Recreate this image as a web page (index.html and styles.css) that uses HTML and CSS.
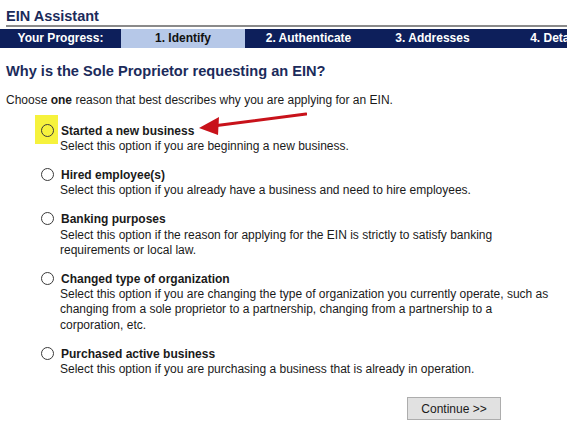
FILE: index.html
```html
<!DOCTYPE html>
<html>
<head>
<meta charset="utf-8">
<link rel="stylesheet" href="styles.css">
</head>
<body>
<div class="page">
  <div class="title">EIN Assistant</div>
  <div class="progress">
    <div class="step first">Your Progress:</div>
    <div class="step current">1. Identify</div>
    <div class="step">2. Authenticate</div>
    <div class="step">3. Addresses</div>
    <div class="step">4. Details</div>
  </div>
  <div class="content">
    <h1 class="heading">Why is the Sole Proprietor requesting an EIN?</h1>
    <p class="intro">Choose <b>one</b> reason that best describes why you are applying for an EIN.</p>
    <div class="options">
      <div class="option">
        <div class="radio-cell hl"><span class="radio"></span></div>
        <div class="text">
          <div class="label">Started a new business</div>
          <div class="desc">Select this option if you are beginning a new business.</div>
        </div>
      </div>
      <div class="option">
        <div class="radio-cell"><span class="radio"></span></div>
        <div class="text">
          <div class="label">Hired employee(s)</div>
          <div class="desc">Select this option if you already have a business and need to hire employees.</div>
        </div>
      </div>
      <div class="option">
        <div class="radio-cell"><span class="radio"></span></div>
        <div class="text">
          <div class="label">Banking purposes</div>
          <div class="desc">Select this option if the reason for applying for the EIN is strictly to satisfy banking requirements or local law.</div>
        </div>
      </div>
      <div class="option">
        <div class="radio-cell"><span class="radio"></span></div>
        <div class="text">
          <div class="label">Changed type of organization</div>
          <div class="desc">Select this option if you are changing the type of organization you currently operate, such as changing from a sole proprietor to a partnership, changing from a partnership to a corporation, etc.</div>
        </div>
      </div>
      <div class="option">
        <div class="radio-cell"><span class="radio"></span></div>
        <div class="text">
          <div class="label">Purchased active business</div>
          <div class="desc">Select this option if you are purchasing a business that is already in operation.</div>
        </div>
      </div>
    </div>
    <div class="actions">
      <button class="btn" type="button">Continue &gt;&gt;</button>
    </div>
  </div>
  <svg class="arrow" width="112" height="32" viewBox="0 0 112 32">
    <line x1="111" y1="10" x2="18" y2="22" stroke="#c8121a" stroke-width="3" stroke-linecap="round"/>
    <polygon points="4,24 24,13 23,31" fill="#c8121a"/>
  </svg>
</div>
</body>
</html>
```
FILE: styles.css
```css
html, body {
  margin: 0;
  padding: 0;
  background: #ffffff;
}
body {
  font-family: "Liberation Sans", Arial, sans-serif;
  font-size: 12px;
  color: #1a1a1a;
  overflow: hidden;
}
.page {
  position: relative;
  width: 567px;
  height: 445px;
  overflow: hidden;
}
.title {
  margin-left: 6px;
  padding-top: 7px;
  height: 18px;
  line-height: 18px;
  font-size: 14.5px;
  font-weight: bold;
  color: #1b2b5b;
  border-bottom: 2px solid #8a8a8a;
}
.progress {
  display: flex;
  margin-top: 2px;
  height: 19px;
  background: #0d1f5b;
  white-space: nowrap;
}
.step {
  box-sizing: border-box;
  flex: 0 0 124px;
  width: 124px;
  line-height: 19px;
  text-align: center;
  font-weight: bold;
  color: #ffffff;
  font-size: 12px;
}
.step.first {
  flex-basis: 121px;
  width: 121px;
}
.step.current {
  background: #b6c8e8;
  color: #111111;
}
.step:not(.first):not(.current) {
  padding-left: 3px;
}
.content {
  padding-left: 6px;
}
.heading {
  margin: 15px 0 0 0;
  font-size: 14.6px;
  line-height: 17px;
  font-weight: bold;
  color: #1b2b5b;
}
.intro {
  margin: 13px 0 0 0;
  line-height: 15px;
}
.options {
  margin-top: 16px;
  display: flex;
  flex-direction: column;
  gap: 13.6px;
}
.option {
  display: flex;
  line-height: 15.3px;
}
.radio-cell {
  position: relative;
  flex: 0 0 23px;
  margin-left: 29px;
  margin-right: 2px;
}
.radio-cell.hl::before {
  content: "";
  position: absolute;
  left: 0;
  top: -9px;
  width: 23px;
  height: 29px;
  background: #f6f23c;
}
.radio {
  position: relative;
  display: block;
  width: 11px;
  height: 11px;
  margin: 0 0 0 6px;
  border: 1px solid #3a3a3a;
  border-radius: 50%;
  background: #ffffff;
}
.radio-cell.hl .radio {
  background: transparent;
}
.text {
  width: 494px;
}
.label {
  font-weight: bold;
  padding-left: 1px;
}
.actions {
  display: flex;
  justify-content: flex-end;
  padding-right: 66px;
  margin-top: 20px;
}
.btn {
  width: 94px;
  height: 23px;
  padding: 0;
  background: #e1e1e1;
  border: 1px solid #adadad;
  border-radius: 0;
  font-family: "Liberation Sans", Arial, sans-serif;
  font-size: 12px;
  color: #1a1a1a;
}
.arrow {
  position: absolute;
  left: 195px;
  top: 104px;
}
```
